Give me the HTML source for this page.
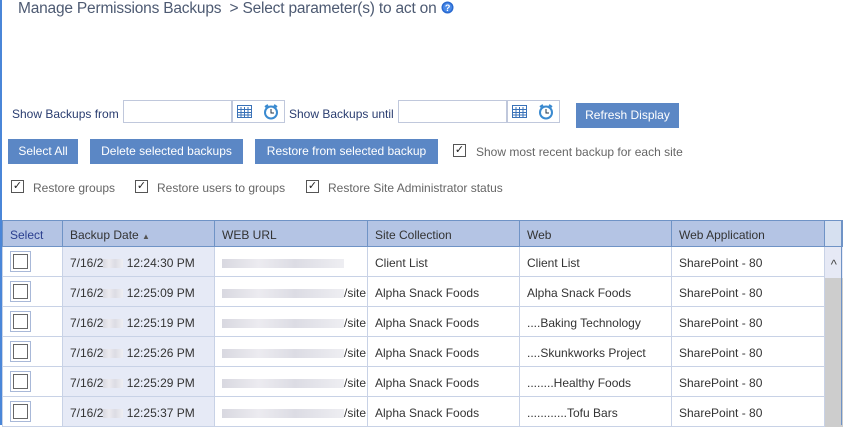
<!DOCTYPE html>
<html><head><style>
body{margin:0;width:848px;height:425px;overflow:hidden;background:#fff;font-family:"Liberation Sans",sans-serif;position:relative}
.a{position:absolute;white-space:nowrap}
.btn{position:absolute;background:#5b87c5;color:#fff;font-size:12px;height:25px;line-height:25px;text-align:center}
.lbl{font-size:12px;color:#2a3d70}
.cb{position:absolute;width:11px;height:11px;border:1px solid #555;background:#fff;font-size:11px;line-height:11px;text-align:center;color:#222}
.gl{font-size:12px;color:#666}
table{position:absolute;left:2px;top:220px;border-collapse:collapse;font-size:12px;table-layout:fixed}
td,th{height:27px;border:1px solid #c8d2e6;padding:2px 0 0 7px;text-align:left;white-space:nowrap;overflow:hidden;color:#333;font-weight:normal}
th{height:23px;background:#b4c4e4;border-color:#6f93c6;color:#333}
td.d{background:#e6eaf6}
.bx{display:inline-block;width:13px;height:13px;border:1px solid #666;box-shadow:0 0 0 2px #fff,0 0 0 3px #a8b8d8;margin-left:3px}
.blur{display:inline-block;vertical-align:middle;height:9px;background:linear-gradient(90deg,#d8d8e0,#ecebf0 30%,#dcdce4 60%,#eeeef2);}
</style></head><body>
<div class="a" style="left:0;top:0;width:2px;height:425px;background:#4a86d8"></div>
<div class="a" style="left:18px;top:0;font-size:15.5px;color:#4d5a72;letter-spacing:-0.2px">Manage Permissions Backups &nbsp;&gt; Select parameter(s) to act on <svg width="13" height="13" style="vertical-align:-1px"><circle cx="6.5" cy="6.5" r="6" fill="#2a6ad0"/><circle cx="6.5" cy="6.5" r="4.5" fill="#4a8ae8"/><text x="6.5" y="10" font-size="9" font-weight="bold" fill="#fff" text-anchor="middle" font-family="Liberation Sans">?</text></svg></div>

<div class="a lbl" style="left:12px;top:107px">Show Backups from</div>
<div class="a" style="left:123px;top:100px;width:108px;height:21px;border:1px solid #c0c8dc"></div>
<div class="a" style="left:231px;top:100px;width:52px;height:21px;border:1px solid #c0c8dc"></div>
<div class="a lbl" style="left:289px;top:107px">Show Backups until</div>
<div class="a" style="left:398px;top:100px;width:108px;height:21px;border:1px solid #c0c8dc"></div>
<div class="a" style="left:506px;top:100px;width:52px;height:21px;border:1px solid #c0c8dc"></div>
<svg class="a" style="left:236px;top:103px" width="48" height="18">
<g stroke="#3a72b8" fill="none"><rect x="1.5" y="2.5" width="14" height="12"/><path d="M1.5 6.5h14M1.5 9.5h14M1.5 12h14M5 4v10M8.5 4v10M12 4v10"/></g>
<circle cx="35" cy="9.5" r="6" fill="#fff" stroke="#3a8ad0" stroke-width="2"/><path d="M35 6v4h3" stroke="#234" fill="none"/><path d="M29 4l3-2M41 4l-3-2" stroke="#3a8ad0" stroke-width="2"/></svg>
<svg class="a" style="left:511px;top:103px" width="48" height="18">
<g stroke="#3a72b8" fill="none"><rect x="1.5" y="2.5" width="14" height="12"/><path d="M1.5 6.5h14M1.5 9.5h14M1.5 12h14M5 4v10M8.5 4v10M12 4v10"/></g>
<circle cx="35" cy="9.5" r="6" fill="#fff" stroke="#3a8ad0" stroke-width="2"/><path d="M35 6v4h3" stroke="#234" fill="none"/><path d="M29 4l3-2M41 4l-3-2" stroke="#3a8ad0" stroke-width="2"/></svg>
<div class="btn" style="left:576px;top:103px;width:103px">Refresh Display</div>

<div class="btn" style="left:8px;top:139px;width:70px">Select All</div>
<div class="btn" style="left:90px;top:139px;width:153px">Delete selected backups</div>
<div class="btn" style="left:255px;top:139px;width:183px">Restore from selected backup</div>
<div class="cb" style="left:453px;top:144px">✓</div>
<div class="a gl" style="left:476px;top:145px">Show most recent backup for each site</div>

<div class="cb" style="left:11px;top:180px">✓</div>
<div class="a gl" style="left:33px;top:181px">Restore groups</div>
<div class="cb" style="left:135px;top:180px">✓</div>
<div class="a gl" style="left:157px;top:181px">Restore users to groups</div>
<div class="cb" style="left:306px;top:180px">✓</div>
<div class="a gl" style="left:328px;top:181px">Restore Site Administrator status</div>

<table>
<colgroup><col style="width:60px"><col style="width:152px"><col style="width:153px"><col style="width:152px"><col style="width:152px"><col style="width:153px"><col style="width:18px"></colgroup>
<tr><th style="color:#2b3f8f">Select</th><th>Backup Date <span style="font-size:8px;color:#555">▲</span></th><th>WEB URL</th><th>Site Collection</th><th>Web</th><th>Web Application</th><th style="background:#d6e0f0;padding:0;border-left:none"></th></tr>
<tr><td><span class="bx"></span></td><td class="d">7/16/2<span class="blur" style="width:20px"></span> 12:24:30 PM</td><td><span class="blur" style="width:122px"></span></td><td>Client List</td><td>Client List</td><td>SharePoint - 80</td><td rowspan="6" style="padding:0;border:none;vertical-align:top;background:#cdcdcd;position:relative"><div style="height:31px;background:#e6e9f5;text-align:center;font-size:13px;line-height:36px;color:#444">^</div></td></tr>
<tr><td><span class="bx"></span></td><td class="d">7/16/2<span class="blur" style="width:20px"></span> 12:25:09 PM</td><td><span class="blur" style="width:122px"></span>/site</td><td>Alpha Snack Foods</td><td>Alpha Snack Foods</td><td>SharePoint - 80</td></tr>
<tr><td><span class="bx"></span></td><td class="d">7/16/2<span class="blur" style="width:20px"></span> 12:25:19 PM</td><td><span class="blur" style="width:122px"></span>/site</td><td>Alpha Snack Foods</td><td>....Baking Technology</td><td>SharePoint - 80</td></tr>
<tr><td><span class="bx"></span></td><td class="d">7/16/2<span class="blur" style="width:20px"></span> 12:25:26 PM</td><td><span class="blur" style="width:122px"></span>/site</td><td>Alpha Snack Foods</td><td>....Skunkworks Project</td><td>SharePoint - 80</td></tr>
<tr><td><span class="bx"></span></td><td class="d">7/16/2<span class="blur" style="width:20px"></span> 12:25:29 PM</td><td><span class="blur" style="width:122px"></span>/site</td><td>Alpha Snack Foods</td><td>........Healthy Foods</td><td>SharePoint - 80</td></tr>
<tr><td><span class="bx"></span></td><td class="d">7/16/2<span class="blur" style="width:20px"></span> 12:25:37 PM</td><td><span class="blur" style="width:122px"></span>/site</td><td>Alpha Snack Foods</td><td>............Tofu Bars</td><td>SharePoint - 80</td></tr>
</table>
<div class="a" style="left:841px;top:220px;width:1px;height:205px;background:#6f93c6"></div>
</body></html>
